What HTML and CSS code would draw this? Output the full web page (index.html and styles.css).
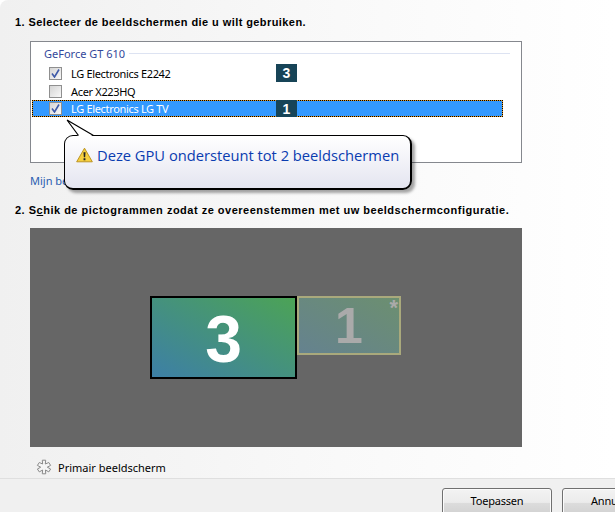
FILE: index.html
```html
<!DOCTYPE html>
<html lang="nl">
  <head>
    <meta charset="utf-8" />
    <title>Beeldschermen instellen</title>
    <link rel="stylesheet" href="styles.css">
  </head>
  <body>
    <div class="page">
      <main class="content">
        <h2 class="step step-one">1. Selecteer de beeldschermen die u wilt gebruiken.</h2>

        <section class="display-box">
          <div class="gpu-title">
            <span>GeForce GT 610</span>
            <i class="gpu-rule"></i>
          </div>
          <ul class="display-list">
            <li class="display-row">
              <span class="check checked"><svg viewBox="0 0 9 9" width="9" height="9"><path d="M1 4.5 L3.5 8 L8 0.5" /></svg></span>
              <span class="display-name">LG Electronics E2242</span>
              <span class="badge">3</span>
            </li>
            <li class="display-row">
              <span class="check"></span>
              <span class="display-name">Acer X223HQ</span>
            </li>
            <li class="display-row selected">
              <span class="check checked"><svg viewBox="0 0 9 9" width="9" height="9"><path d="M1 4.5 L3.5 8 L8 0.5" /></svg></span>
              <span class="display-name">LG Electronics LG TV</span>
              <span class="badge">1</span>
            </li>
          </ul>
        </section>

        <a class="more-link" href="#">Mijn beeldscherm wordt niet weergegeven</a>

        <h2 class="step step-two">2. S<u>c</u>hik de pictogrammen zodat ze overeenstemmen met uw beeldschermconfiguratie.</h2>

        <section class="arrange-panel">
          <div class="monitor monitor-main">3</div>
          <div class="monitor monitor-second">1<span class="star">*</span></div>
        </section>

        <div class="legend">
          <svg class="legend-star" viewBox="0 0 16 16" width="16" height="16">
            <path d="M6.3 1.2 H9.7 L9.3 5 L12.8 3.5 L14.6 6.4 L11.3 8.2 L14.6 10 L12.8 12.9 L9.5 11 L9.7 14.8 H6.3 L6.6 11 L3.3 12.9 L1.4 10 L4.7 8.2 L1.4 6.4 L3.3 3.5 L6.6 5 Z" />
          </svg>
          <span>Primair beeldscherm</span>
        </div>
      </main>

      <footer class="button-bar">
        <button class="btn" type="button">Toepassen</button>
        <button class="btn" type="button">Annuleren</button>
      </footer>

      <!-- warning balloon over the list -->
      <div class="balloon">
        <svg class="warn-icon" viewBox="0 0 18 16" width="17" height="16">
          <path class="warn-fill" d="M9 0.8 L17.3 15.2 H0.7 Z" />
          <path class="warn-mark" d="M7.9 5 H10.1 L9.7 10.5 H8.3 Z M8 11.5 H10 V13.5 H8 Z" />
        </svg>
        <span>Deze GPU ondersteunt tot 2 beeldschermen</span>
      </div>
      <svg class="balloon-tail" viewBox="0 0 32 20" width="32" height="20">
        <path class="tail-fill" d="M3 2 L14.5 18.5 L29.5 18.5 Z" />
        <path class="tail-line" d="M3 2 L14.5 17.5 M3 2 L29.5 17.5" />
      </svg>
    </div>
  </body>
</html>
```

FILE: styles.css
```css
html,
body {
  margin: 0;
  height: 100%;
  overflow: hidden;
  background: #fff;
}

.page {
  position: relative;
  width: 615px;
  height: 512px;
  overflow: hidden;
  display: flex;
  flex-direction: column;
  font-family: "Noto Sans", "Liberation Sans", sans-serif;
  font-size: 11px;
  color: #000;
  background: linear-gradient(to right, #f0f0f0, #f9f9f9 55%, #fff 100%);
  border-top-left-radius: 8px;
}

.content {
  flex: 1;
  padding: 15px 0 0 30px;
}

.step {
  margin: 0 0 0 -15px;
  font-family: "Liberation Sans", sans-serif;
  font-size: 11px;
  line-height: 14px;
  font-weight: bold;
  white-space: nowrap;
}

.step-one {
  letter-spacing: 0.42px;
}

.step-two {
  margin-top: 15px;
  letter-spacing: 0.5px;
}

.display-box {
  width: 490px;
  height: 120px;
  margin-top: 12px;
  background: #fff;
  border: 1px solid #85888e;
}

.gpu-title {
  display: flex;
  align-items: center;
  gap: 4px;
  height: 18px;
  margin: 2px 11px 0 13px;
  font-size: 11px;
  color: #33489b;
}

.gpu-rule {
  flex: 1;
  height: 1px;
  background: #dde3f2;
}

.display-list {
  margin: 2px 0 0;
  padding: 0;
  list-style: none;
}

.display-row {
  position: relative;
  display: flex;
  align-items: center;
  width: 471px;
  height: 18px;
  margin-left: 1px;
  box-sizing: border-box;
  padding-left: 17px;
}

.display-row.selected {
  background: #3399ff;
  outline: 1px dotted #000;
  outline-offset: -1px;
  box-shadow: inset 0 0 0 1px #e89a20;
  height: 17px;
  color: #fff;
}

.check {
  display: flex;
  align-items: center;
  justify-content: center;
  width: 11px;
  height: 11px;
  background: linear-gradient(135deg, #d4d4d4, #f8f8f8);
  border: 1px solid #8f8f8f;
}

.check svg path {
  fill: none;
  stroke: #3e5aa8;
  stroke-width: 1.6;
}

.display-name {
  margin-left: 9px;
  white-space: nowrap;
  letter-spacing: -0.33px;
}

.badge {
  position: absolute;
  left: 244px;
  top: 0;
  bottom: 0;
  width: 21px;
  display: flex;
  align-items: center;
  justify-content: center;
  background: #174457;
  color: #fff;
  font-family: "Liberation Sans", sans-serif;
  font-size: 14px;
  font-weight: bold;
}

.more-link {
  display: block;
  margin-top: 11px;
  height: 14px;
  line-height: 14px;
  color: #2a5db0;
  text-decoration: none;
}

.arrange-panel {
  position: relative;
  width: 492px;
  height: 219px;
  margin-top: 11px;
  background: #666;
}

.monitor {
  position: absolute;
  box-sizing: border-box;
  display: flex;
  align-items: center;
  justify-content: center;
  font-family: "Liberation Sans", sans-serif;
  font-weight: bold;
}

.monitor-main {
  left: 120px;
  top: 68px;
  width: 147px;
  height: 83px;
  border: 2px solid #000;
  background: linear-gradient(to top right, #3d7fa6, #4ca356);
  color: #fff;
  font-size: 66px;
  line-height: 1;
  padding-top: 2px;
}

.monitor-second {
  left: 267px;
  top: 68px;
  width: 104px;
  height: 59px;
  border: 2px solid #a9a97c;
  background: linear-gradient(to top right, #65828f, #6c8f70);
  color: #aaa;
  font-size: 50px;
}

.star {
  position: absolute;
  right: 1px;
  top: -1px;
  font-size: 22px;
  line-height: 22px;
}

.legend {
  display: flex;
  align-items: center;
  gap: 6px;
  height: 16px;
  margin: 12px 0 0 6px;
}

.legend-star {
  fill: #f4f4f4;
  stroke: #8a8a8a;
  stroke-width: 1;
}

.button-bar {
  display: flex;
  gap: 10px;
  flex: none;
  height: 34px;
  padding: 9px 0 0 442px;
  box-sizing: border-box;
  background: #f0f0f0;
  border-top: 1px solid #dfdfdf;
}

.btn {
  flex: none;
  width: 110px;
  height: 30px;
  padding: 0 0 6px;
  font: 11px "Noto Sans", "Liberation Sans", sans-serif;
  letter-spacing: -0.2px;
  color: #000;
  background: linear-gradient(to bottom, #f3f3f3 0, #ebebeb 48%, #dcdcdc 50%, #cfcfcf 100%);
  border: 1px solid #707070;
  border-radius: 3px;
  box-shadow: inset 0 0 0 1px #fbfbfb;
}

.balloon {
  position: absolute;
  left: 64px;
  top: 135px;
  box-sizing: border-box;
  width: 348px;
  height: 55px;
  display: flex;
  align-items: center;
  gap: 4px;
  padding: 0 0 15px 11px;
  background: linear-gradient(to bottom, #fff, #e4e5f0);
  border: 1px solid #000;
  border-width: 1px 2px 2px 1px;
  border-radius: 9px;
  box-shadow: 3px 3px 3px rgba(0, 0, 0, 0.35);
  color: #0a3cb0;
  font-family: "Open Sans", "Noto Sans", sans-serif;
  font-size: 14.7px;
  white-space: nowrap;
}

.warn-fill {
  fill: #f6cf3e;
  stroke: #b98f1c;
  stroke-width: 1;
}

.warn-mark {
  fill: #222;
}

.balloon-tail {
  position: absolute;
  left: 64px;
  top: 118px;
}

.tail-fill {
  fill: #fff;
}

.tail-line {
  fill: none;
  stroke: #000;
  stroke-width: 1.2;
}
```
